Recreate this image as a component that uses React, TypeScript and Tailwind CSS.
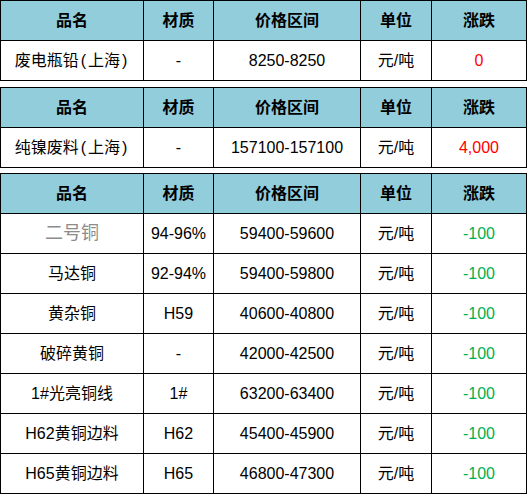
import type { ReactNode } from "react";

const cols = "grid grid-cols-[142px_69px_146px_70px_94px] auto-rows-[39px] gap-px bg-black p-px";

type Row = {
  name: ReactNode;
  key: string;
  grade: string;
  range: string;
  unit: string;
  change: string;
  up?: boolean;
  light?: boolean;
};

const headers = ["品名", "材质", "价格区间", "单位", "涨跌"];

// parens in the source are spaced a bit wider than Arial's
const Paren = ({ c }: { c: string }) => <span className="mx-[2px]">{c}</span>;

const tables: Row[][] = [
  [
    {
      key: "pb",
      name: (
        <>
          废电瓶铅<Paren c="(" />上海<Paren c=")" />
        </>
      ),
      grade: "-",
      range: "8250-8250",
      unit: "元/吨",
      change: "0",
      up: true,
    },
  ],
  [
    {
      key: "ni",
      name: (
        <>
          纯镍废料<Paren c="(" />上海<Paren c=")" />
        </>
      ),
      grade: "-",
      range: "157100-157100",
      unit: "元/吨",
      change: "4,000",
      up: true,
    },
  ],
  [
    { key: "1", name: "二号铜", grade: "94-96%", range: "59400-59600", unit: "元/吨", change: "-100", light: true },
    { key: "2", name: "马达铜", grade: "92-94%", range: "59400-59800", unit: "元/吨", change: "-100" },
    { key: "3", name: "黄杂铜", grade: "H59", range: "40600-40800", unit: "元/吨", change: "-100" },
    { key: "4", name: "破碎黄铜", grade: "-", range: "42000-42500", unit: "元/吨", change: "-100" },
    { key: "5", name: "1#光亮铜线", grade: "1#", range: "63200-63400", unit: "元/吨", change: "-100" },
    { key: "6", name: "H62黄铜边料", grade: "H62", range: "45400-45900", unit: "元/吨", change: "-100" },
    { key: "7", name: "H65黄铜边料", grade: "H65", range: "46800-47300", unit: "元/吨", change: "-100" },
  ],
];

const cell = "flex items-center justify-center bg-white text-black";
const font = "font-['Liberation_Sans','Noto_Sans_CJK_SC',sans-serif]";

function PriceTable({ rows }: { rows: Row[] }) {
  return (
    <div className={cols}>
      {headers.map((h) => (
        <div
          key={h}
          className={`flex items-center justify-center bg-[#92cddc] text-[16px] font-bold text-black ${font}`}
        >
          {h}
        </div>
      ))}
      {rows.map((r) => (
        <div key={r.key} className="contents">
          <div
            className={`${cell} ${font} ${r.light ? "text-[18px] !text-[#8c8c8c]" : "text-[16px]"}`}
          >
            {r.name}
          </div>
          <div className={`${cell} ${font} text-[16px]`}>{r.grade}</div>
          <div className={`${cell} ${font} text-[16px]`}>{r.range}</div>
          <div className={`${cell} ${font} text-[16px]`}>{r.unit}</div>
          <div
            className={`${cell} ${font} text-[16px] ${r.up ? "!text-[#ff0000]" : "!text-[#00b050]"}`}
          >
            {r.change}
          </div>
        </div>
      ))}
    </div>
  );
}

export default function App() {
  return (
    <div className="w-[527px] h-[495px] bg-white flex flex-col">
      <PriceTable rows={tables[0]} />
      <div className="mt-[6px]">
        <PriceTable rows={tables[1]} />
      </div>
      <div className="mt-[5px]">
        <PriceTable rows={tables[2]} />
      </div>
    </div>
  );
}
